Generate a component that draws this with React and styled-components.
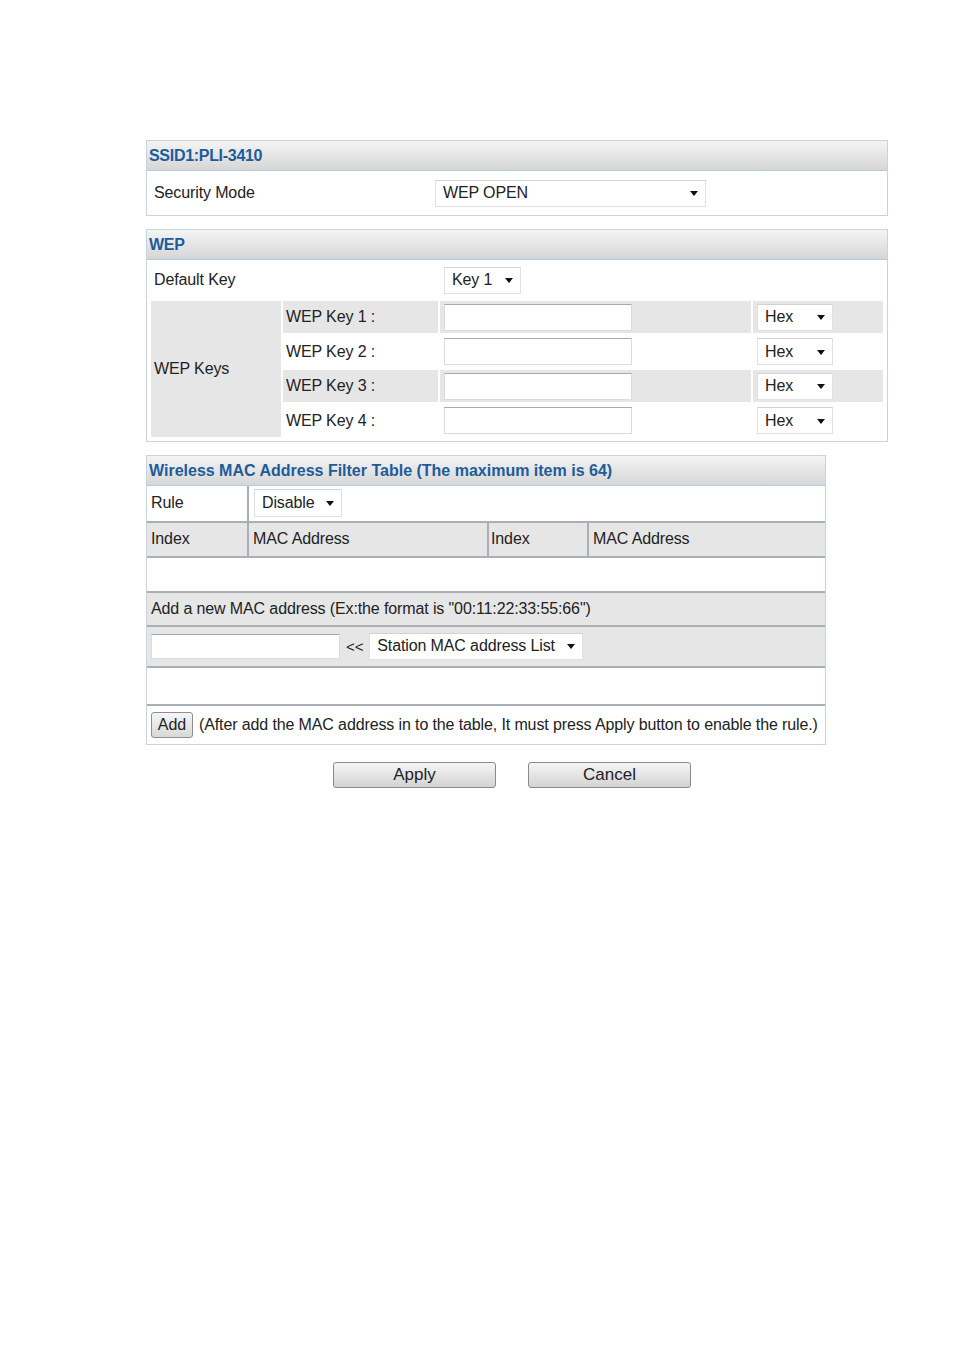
import React from 'react';
import styled, { createGlobalStyle } from 'styled-components';

const GlobalStyle = createGlobalStyle`
  body {
    margin: 0;
    background: #fff;
    font-family: "Liberation Sans", Arial, sans-serif;
    font-size: 16px;
    letter-spacing: -0.12px;
    color: #222;
  }
`;

const Page = styled.div`
  box-sizing: border-box;
  min-height: 1348px;
  padding: 140px 0 0 146px;
`;

const Panel = styled.section`
  box-sizing: border-box;
  width: ${p => p.$w}px;
  margin-bottom: 13px;
  border: 1px solid #c6d4e2;
  background: #fff;
`;

const PanelHead = styled.div`
  height: 28px;
  display: flex;
  align-items: center;
  padding: 1px 0 0 2px;
  background: linear-gradient(#f4f4f4, #d6d6d6);
  border-bottom: 1px solid #b7cadc;
  color: #1d5c9b;
  font-weight: bold;
  font-size: 16px;
  letter-spacing: ${p => p.$ls ?? -0.3}px;
  white-space: nowrap;
`;

const ModeRow = styled.div`
  height: 44px;
  display: flex;
  align-items: center;
  padding-left: 7px;
`;

const ModeLabel = styled.div`
  width: 281px;
`;

const Select = styled.div`
  box-sizing: border-box;
  position: relative;
  width: ${p => p.$w}px;
  height: ${p => p.$h || 27}px;
  display: flex;
  align-items: center;
  padding-left: 7px;
  background: #fff;
  border: 1px solid #e0e0e0;
  border-top-color: #d2d2d2;
  color: #222;
  white-space: nowrap;
  &::after {
    content: '';
    position: absolute;
    right: 7px;
    top: 50%;
    margin-top: -2px;
    border-left: 4.5px solid transparent;
    border-right: 4.5px solid transparent;
    border-top: 5px solid #111;
  }
`;

const WepGrid = styled.div`
  display: grid;
  grid-template-columns: 130px 155px 311px 130px;
  grid-template-rows: 36.5px repeat(4, 32px);
  gap: 2.5px 2px;
  padding: 2px 3px 4px 4px;
`;

const Cell = styled.div`
  display: flex;
  align-items: center;
  padding-left: ${p => p.$pad ?? 3}px;
  background: ${p => (p.$gray ? '#e6e6e6' : '#fff')};
  grid-column: ${p => p.$col || 'auto'};
  grid-row: ${p => p.$row || 'auto'};
`;

const TextInput = styled.div`
  box-sizing: border-box;
  width: ${p => p.$w}px;
  height: ${p => p.$h || 27}px;
  background: #fff;
  border: 1px solid #dcdcdc;
  border-top-color: #a9a9a9;
`;

const MacRow = styled.div`
  display: grid;
  grid-template-columns: ${p => p.$cols || '1fr'};
  height: ${p => p.$h}px;
  background: ${p => (p.$gray ? '#e6e6e6' : '#fff')};
  border-top: ${p => (p.$line ? '2px solid #a9afb6' : 'none')};
`;

const MacCell = styled.div`
  display: flex;
  align-items: center;
  gap: 6px;
  padding-left: ${p => p.$pad ?? 4}px;
  white-space: nowrap;
  border-left: ${p => (p.$divider ? '2px solid #a9afb6' : 'none')};
`;

const Arrows = styled.span`
  font-size: 15px;
`;

const SmallButton = styled.button`
  box-sizing: border-box;
  width: 42px;
  height: 26px;
  padding: 0;
  font-family: inherit;
  font-size: 16px;
  color: #222;
  background: linear-gradient(#f6f6f6, #d8d8d8);
  border: 1px solid #8f8f8f;
  border-radius: 3px;
`;

const Actions = styled.div`
  display: flex;
  gap: 32px;
  padding: 4px 0 0 187px;
`;

const ActionButton = styled.button`
  box-sizing: border-box;
  width: 163px;
  height: 26px;
  padding: 0;
  font-family: inherit;
  font-size: 17px;
  color: #222;
  background: linear-gradient(#f5f5f5, #d3d3d3);
  border: 1px solid #8a8a8a;
  border-radius: 3px;
`;

const keys = [1, 2, 3, 4];
const macCols = '100px 240px 100px 1fr';

export default function App() {
  return (
    <Page>
      <GlobalStyle />

      <Panel $w={742}>
        <PanelHead>SSID1:PLI-3410</PanelHead>
        <ModeRow>
          <ModeLabel>Security Mode</ModeLabel>
          <Select $w={271}>WEP OPEN</Select>
        </ModeRow>
      </Panel>

      <Panel $w={742}>
        <PanelHead>WEP</PanelHead>
        <WepGrid>
          <Cell $col="1 / 3">Default Key</Cell>
          <Cell $pad={4}>
            <Select $w={77}>Key 1</Select>
          </Cell>
          <Cell />
          <Cell $gray $row="2 / 6" $col="1">WEP Keys</Cell>
          {keys.map(k => (
            <React.Fragment key={k}>
              <Cell $gray={k % 2 === 1}>WEP Key {k} :</Cell>
              <Cell $gray={k % 2 === 1} $pad={4}>
                <TextInput $w={188} />
              </Cell>
              <Cell $gray={k % 2 === 1} $pad={4}>
                <Select $w={76}>Hex</Select>
              </Cell>
            </React.Fragment>
          ))}
        </WepGrid>
      </Panel>

      <Panel $w={680}>
        <PanelHead $ls={0}>Wireless MAC Address Filter Table (The maximum item is 64)</PanelHead>
        <MacRow $h={35} $cols="100px 1fr">
          <MacCell>Rule</MacCell>
          <MacCell $divider $pad={5}>
            <Select $w={88} $h={28}>Disable</Select>
          </MacCell>
        </MacRow>
        <MacRow $h={33} $line $gray $cols={macCols}>
          <MacCell>Index</MacCell>
          <MacCell $divider>MAC Address</MacCell>
          <MacCell $divider $pad={2}>Index</MacCell>
          <MacCell $divider>MAC Address</MacCell>
        </MacRow>
        <MacRow $h={33} $line />
        <MacRow $h={32} $line $gray>
          <MacCell>Add a new MAC address (Ex:the format is "00:11:22:33:55:66")</MacCell>
        </MacRow>
        <MacRow $h={39} $line $gray>
          <MacCell>
            <TextInput $w={189} $h={25} />
            <Arrows>&lt;&lt;</Arrows>
            <Select $w={214} $h={27}>Station MAC address List</Select>
          </MacCell>
        </MacRow>
        <MacRow $h={36} $line />
        <MacRow $h={38} $line>
          <MacCell>
            <SmallButton>Add</SmallButton>
            <span>(After add the MAC address in to the table, It must press Apply button to enable the rule.)</span>
          </MacCell>
        </MacRow>
      </Panel>

      <Actions>
        <ActionButton>Apply</ActionButton>
        <ActionButton>Cancel</ActionButton>
      </Actions>
    </Page>
  );
}
